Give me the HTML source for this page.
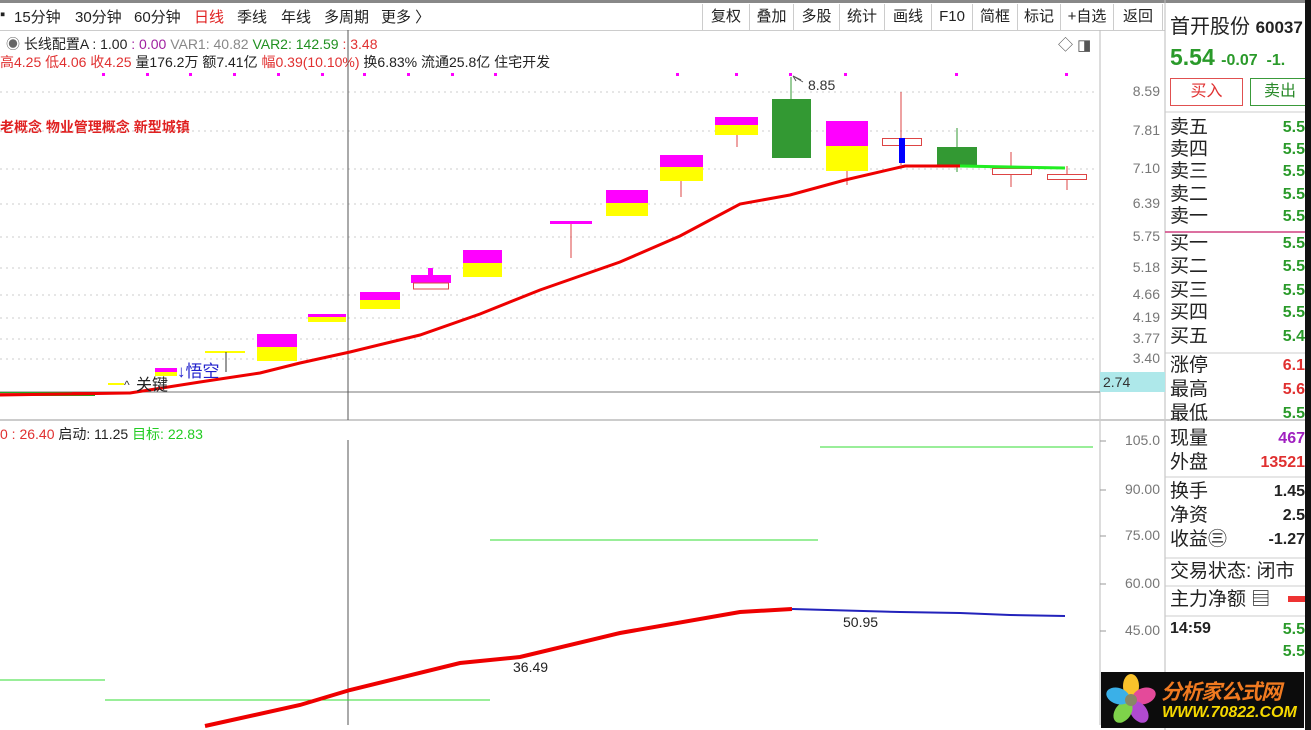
<!DOCTYPE html>
<html><head><meta charset="utf-8"><style>
*{margin:0;padding:0;box-sizing:border-box}
body{width:1311px;height:730px;overflow:hidden;background:#fff;font-family:"Liberation Sans","Noto Sans CJK SC",sans-serif;position:relative}
.a{position:absolute;white-space:nowrap}
.tb{font-size:15px;color:#222;top:6px}
.btn{position:absolute;top:4px;height:26px;border-left:1px solid #ccc;font-size:15px;line-height:26px;text-align:center;color:#222}
.rl{position:absolute;left:1170px;font-size:19px;color:#222;line-height:20px}
.rv{position:absolute;right:6px;font-size:16px;font-weight:bold;color:#2a9a2a;line-height:20px;text-align:right}
.ax{position:absolute;left:1100px;width:60px;text-align:right;font-size:14px;color:#777}
</style></head><body>
<div class="a" style="left:0;top:0;width:1311px;height:3px;background:#888"></div>
<div class="a tb" style="left:0">▪</div>
<div class="a tb" style="left:14px">15分钟</div>
<div class="a tb" style="left:75px">30分钟</div>
<div class="a tb" style="left:134px">60分钟</div>
<div class="a tb" style="left:194px;color:#e02020">日线</div>
<div class="a tb" style="left:237px">季线</div>
<div class="a tb" style="left:281px">年线</div>
<div class="a tb" style="left:324px">多周期</div>
<div class="a tb" style="left:381px">更多 〉</div>
<div class="btn" style="left:702px;width:47px">复权</div>
<div class="btn" style="left:749px;width:44px">叠加</div>
<div class="btn" style="left:793px;width:46px">多股</div>
<div class="btn" style="left:839px;width:45px">统计</div>
<div class="btn" style="left:884px;width:47px">画线</div>
<div class="btn" style="left:931px;width:41px">F10</div>
<div class="btn" style="left:972px;width:45px">简框</div>
<div class="btn" style="left:1017px;width:43px">标记</div>
<div class="btn" style="left:1060px;width:53px">+自选</div>
<div class="btn" style="left:1113px;width:50px;border-right:1px solid #ccc">返回</div>
<div class="a" style="left:0;top:30px;width:1165px;height:1px;background:#ccc"></div>
<div class="a" style="left:1170px;top:10px;font-size:20px;color:#222">首开股份 <b style="font-size:17px">60037</b></div>
<div class="a" style="left:1170px;top:44px;font-size:23px;font-weight:bold;color:#2a9a2a">5.54 <span style="font-size:16px">-0.07 &nbsp;-1.</span></div>
<div class="a" style="left:1170px;top:78px;width:73px;height:28px;border:1px solid #e05050;color:#e03030;font-size:16px;text-align:center;line-height:26px">买入</div>
<div class="a" style="left:1250px;top:78px;width:60px;height:28px;border:1px solid #3a9a3a;color:#2a8a2a;font-size:16px;text-align:center;line-height:26px">卖出</div>

<div class="a" style="left:6px;top:34px;font-size:14px;color:#222"><span style="color:#666">◉</span> 长线配置A : 1.00 <span style="color:#a020a0">: 0.00</span> <span style="color:#888">VAR1: 40.82</span> <span style="color:#209020">VAR2: 142.59</span> <span style="color:#e03030">: 3.48</span></div>
<div class="a" style="left:0;top:52px;font-size:14px;color:#222"><span style="color:#e03030">高4.25 低4.06 收4.25</span> 量176.2万 额7.41亿 <span style="color:#e03030">幅0.39(10.10%)</span> 换6.83% 流通25.8亿 住宅开发</div>
<div class="a" style="left:0;top:117px;font-size:14px;color:#e02020;font-weight:bold">老概念 物业管理概念 新型城镇</div>
<div class="a" style="left:1058px;top:34px;font-size:15px;color:#555">◇ ◨</div>

<svg class="a" style="left:0;top:0" width="1311" height="730">
<g stroke="#ccc" stroke-dasharray="2,4">
<line x1="0" y1="92" x2="1095" y2="92"/><line x1="0" y1="131" x2="1095" y2="131"/><line x1="0" y1="169" x2="1095" y2="169"/><line x1="0" y1="204" x2="1095" y2="204"/><line x1="0" y1="237" x2="1095" y2="237"/><line x1="0" y1="268" x2="1095" y2="268"/><line x1="0" y1="295" x2="1095" y2="295"/><line x1="0" y1="318" x2="1095" y2="318"/><line x1="0" y1="339" x2="1095" y2="339"/><line x1="0" y1="359" x2="1095" y2="359"/>
</g>
<line x1="1100" y1="30" x2="1100" y2="725" stroke="#bbb"/>
<line x1="1165" y1="0" x2="1165" y2="730" stroke="#bbb"/>
<line x1="0" y1="392" x2="1100" y2="392" stroke="#777"/>
<line x1="0" y1="420" x2="1311" y2="420" stroke="#ccc" stroke-width="2"/>
<line x1="348" y1="30" x2="348" y2="420" stroke="#555"/>
<line x1="348" y1="440" x2="348" y2="725" stroke="#555"/>
<g fill="#f0f">
<rect x="102" y="73" width="3" height="3"/><rect x="146" y="73" width="3" height="3"/><rect x="189" y="73" width="3" height="3"/><rect x="233" y="73" width="3" height="3"/><rect x="277" y="73" width="3" height="3"/><rect x="321" y="73" width="3" height="3"/><rect x="363" y="73" width="3" height="3"/><rect x="407" y="73" width="3" height="3"/><rect x="451" y="73" width="3" height="3"/><rect x="494" y="73" width="3" height="3"/><rect x="676" y="73" width="3" height="3"/><rect x="735" y="73" width="3" height="3"/><rect x="789" y="73" width="3" height="3"/><rect x="844" y="73" width="3" height="3"/><rect x="955" y="73" width="3" height="3"/><rect x="1065" y="73" width="3" height="3"/>
</g>
<rect x="0" y="392" width="95" height="4" fill="#2a2"/><rect x="0" y="393" width="20" height="2" fill="#d55"/><rect x="72" y="392" width="22" height="3" fill="#c22"/>
<line x1="108" y1="384" x2="124" y2="384" stroke="#ff0" stroke-width="2"/>
<rect x="155" y="368" width="22" height="4" fill="#f0f"/><rect x="155" y="372" width="22" height="4" fill="#ff0"/>
<line x1="205" y1="352" x2="245" y2="352" stroke="#ff0" stroke-width="2"/><line x1="226" y1="352" x2="226" y2="372" stroke="#333"/>
<rect x="257" y="334" width="40" height="13" fill="#f0f"/><rect x="257" y="347" width="40" height="14" fill="#ff0"/>
<rect x="308" y="314" width="38" height="3" fill="#f0f"/><rect x="308" y="317" width="38" height="5" fill="#ff0"/>
<rect x="360" y="292" width="40" height="8" fill="#f0f"/><rect x="360" y="300" width="40" height="9" fill="#ff0"/>
<rect x="428" y="268" width="5" height="8" fill="#f0f"/><rect x="411" y="275" width="40" height="8" fill="#f0f"/><rect x="413.5" y="283" width="35" height="6" fill="none" stroke="#d44"/>
<rect x="463" y="250" width="39" height="13" fill="#f0f"/><rect x="463" y="263" width="39" height="14" fill="#ff0"/>
<line x1="571" y1="222" x2="571" y2="258" stroke="#d44"/><rect x="550" y="221" width="42" height="3" fill="#f0f"/>
<rect x="606" y="190" width="42" height="13" fill="#f0f"/><rect x="606" y="203" width="42" height="13" fill="#ff0"/>
<line x1="681" y1="181" x2="681" y2="197" stroke="#d44"/><rect x="660" y="155" width="43" height="12" fill="#f0f"/><rect x="660" y="167" width="43" height="14" fill="#ff0"/>
<line x1="737" y1="135" x2="737" y2="147" stroke="#d44"/><rect x="715" y="117" width="43" height="8" fill="#f0f"/><rect x="715" y="125" width="43" height="10" fill="#ff0"/>
<line x1="791" y1="77" x2="791" y2="99" stroke="#393"/><rect x="772" y="99" width="39" height="59" fill="#393"/>
<line x1="847" y1="171" x2="847" y2="185" stroke="#d44"/><rect x="826" y="121" width="42" height="25" fill="#f0f"/><rect x="826" y="146" width="42" height="25" fill="#ff0"/>
<line x1="901" y1="92" x2="901" y2="165" stroke="#d44"/><rect x="882.5" y="138.5" width="39" height="7" fill="#fff" stroke="#d44"/><rect x="899" y="138" width="6" height="25" fill="#00f"/>
<line x1="957" y1="128" x2="957" y2="172" stroke="#393"/><rect x="937" y="147" width="40" height="19" fill="#393"/>
<line x1="1011" y1="152" x2="1011" y2="187" stroke="#d44"/><rect x="992.5" y="168.5" width="39" height="6" fill="#fff" stroke="#d44"/>
<line x1="1067" y1="166" x2="1067" y2="190" stroke="#d44"/><rect x="1047.5" y="174.5" width="39" height="5" fill="#fff" stroke="#d44"/>
<polyline fill="none" stroke="#e00" stroke-width="3" points="0,395 130,393 200,382 260,373 300,363 350,352 420,335 480,314 540,290 620,262 680,236 740,204 790,195 845,180 905,166 960,166"/>
<polyline fill="none" stroke="#2e2" stroke-width="3" points="960,166 1065,168"/>
<path d="M793 76 l8 4 M793 76 l3 5 M793 76 l10 6" stroke="#555" fill="none"/>
<text x="808" y="90" font-size="14" fill="#333" font-family="Liberation Sans">8.85</text>
<text x="124" y="389" font-size="12" fill="#333" font-family="Liberation Sans">^</text>
<text x="136" y="390" font-size="16" fill="#222" font-family="Liberation Sans,Noto Sans CJK SC">关键</text>
<text x="177" y="377" font-size="17" fill="#22c" font-family="Liberation Sans,Noto Sans CJK SC">↓悟空</text>
<line x1="820" y1="447" x2="1093" y2="447" stroke="#3d3"/>
<line x1="490" y1="540" x2="818" y2="540" stroke="#3d3"/>
<line x1="0" y1="680" x2="105" y2="680" stroke="#3d3"/>
<line x1="105" y1="700" x2="490" y2="700" stroke="#3d3"/>
<polyline fill="none" stroke="#e00" stroke-width="4" points="205,726 300,705 350,690 460,663 520,657 620,633 740,612 792,609"/>
<polyline fill="none" stroke="#22b" stroke-width="2" points="792,609 900,612 960,613 1010,615 1065,616"/>
<text x="843" y="627" font-size="14" fill="#222" font-family="Liberation Sans">50.95</text>
<text x="513" y="672" font-size="14" fill="#222" font-family="Liberation Sans">36.49</text>
<g stroke="#999"><line x1="1100" y1="441" x2="1106" y2="441"/><line x1="1100" y1="490" x2="1106" y2="490"/><line x1="1100" y1="536" x2="1106" y2="536"/><line x1="1100" y1="584" x2="1106" y2="584"/><line x1="1100" y1="631" x2="1106" y2="631"/></g>
<g stroke="#ccc"><line x1="1165" y1="112" x2="1305" y2="112"/><line x1="1165" y1="353" x2="1305" y2="353"/><line x1="1165" y1="477" x2="1305" y2="477"/><line x1="1165" y1="558" x2="1305" y2="558"/><line x1="1165" y1="586" x2="1305" y2="586"/><line x1="1165" y1="616" x2="1305" y2="616"/></g>
<line x1="1165" y1="232" x2="1305" y2="232" stroke="#d04080" stroke-width="1.5"/>
<rect x="1305" y="0" width="6" height="730" fill="#111"/>
</svg>
<div class="a" style="left:0;top:424px;font-size:14px;color:#e03030">0 : 26.40 <span style="color:#222">启动: 11.25</span> <span style="color:#2c2">目标: 22.83</span></div>
<div class="ax" style="top:83px">8.59</div><div class="ax" style="top:122px">7.81</div><div class="ax" style="top:160px">7.10</div><div class="ax" style="top:195px">6.39</div><div class="ax" style="top:228px">5.75</div><div class="ax" style="top:259px">5.18</div><div class="ax" style="top:286px">4.66</div><div class="ax" style="top:309px">4.19</div><div class="ax" style="top:330px">3.77</div><div class="ax" style="top:350px">3.40</div>
<div class="a" style="left:1100px;top:372px;width:65px;height:20px;background:#aee8ea;font-size:14px;color:#333;padding-left:3px;line-height:20px">2.74</div>
<div class="ax" style="top:432px">105.0</div><div class="ax" style="top:481px">90.00</div><div class="ax" style="top:527px">75.00</div><div class="ax" style="top:575px">60.00</div><div class="ax" style="top:622px">45.00</div>
<div class="rl" style="top:118px">卖五</div><div class="rl" style="top:140px">卖四</div><div class="rl" style="top:162px">卖三</div><div class="rl" style="top:185px">卖二</div><div class="rl" style="top:207px">卖一</div>
<div class="rl" style="top:234px">买一</div><div class="rl" style="top:257px">买二</div><div class="rl" style="top:281px">买三</div><div class="rl" style="top:303px">买四</div><div class="rl" style="top:327px">买五</div>
<div class="rl" style="top:356px">涨停</div><div class="rl" style="top:380px">最高</div><div class="rl" style="top:404px">最低</div><div class="rl" style="top:429px">现量</div><div class="rl" style="top:453px">外盘</div>
<div class="rl" style="top:482px">换手</div><div class="rl" style="top:506px">净资</div><div class="rl" style="top:530px">收益㊂</div>
<div class="rl" style="top:562px">交易状态: 闭市</div><div class="rl" style="top:590px">主力净额 ▤</div>
<div class="a" style="left:1288px;top:596px;width:17px;height:6px;background:#e33"></div>
<div class="rv" style="top:118px">5.5</div><div class="rv" style="top:140px">5.5</div><div class="rv" style="top:162px">5.5</div><div class="rv" style="top:185px">5.5</div><div class="rv" style="top:207px">5.5</div>
<div class="rv" style="top:234px">5.5</div><div class="rv" style="top:257px">5.5</div><div class="rv" style="top:281px">5.5</div><div class="rv" style="top:303px">5.5</div><div class="rv" style="top:327px">5.4</div>
<div class="rv" style="top:356px;color:#e03030">6.1</div><div class="rv" style="top:380px;color:#e03030">5.6</div><div class="rv" style="top:404px">5.5</div><div class="rv" style="top:429px;color:#a020c0">467</div><div class="rv" style="top:453px;color:#e03030">13521</div>
<div class="rv" style="top:482px;color:#222">1.45</div><div class="rv" style="top:506px;color:#222">2.5</div><div class="rv" style="top:530px;color:#222">-1.27</div>
<div class="a" style="left:1170px;top:620px;font-size:16px;font-weight:bold;color:#222">14:59</div>
<div class="rv" style="top:620px">5.5</div><div class="rv" style="top:642px">5.5</div>
<div class="a" style="left:1101px;top:672px;width:203px;height:56px;background:#0c0c0c;overflow:hidden">
<svg width="56" height="56" style="position:absolute;left:2px;top:0"><g transform="translate(28,28)"><ellipse cx="0" cy="-14" rx="8" ry="12" fill="#f9c22b"/><ellipse cx="13" cy="-4" rx="8" ry="12" fill="#e44a9a" transform="rotate(72 13 -4)"/><ellipse cx="8" cy="12" rx="8" ry="12" fill="#b04ad0" transform="rotate(144 8 12)"/><ellipse cx="-8" cy="12" rx="8" ry="12" fill="#7ed24a" transform="rotate(216 -8 12)"/><ellipse cx="-13" cy="-4" rx="8" ry="12" fill="#3ab0e8" transform="rotate(288 -13 -4)"/><circle r="6" fill="#886"/></g></svg>
<div class="a" style="left:60px;top:4px;font-size:21px;font-weight:bold;font-style:italic;color:#f07a20;letter-spacing:-1px">分析家公式网</div>
<div class="a" style="left:61px;top:32px;font-size:16px;font-weight:bold;font-style:italic;color:#f5d800">WWW.70822.COM</div>
</div>
</body></html>
